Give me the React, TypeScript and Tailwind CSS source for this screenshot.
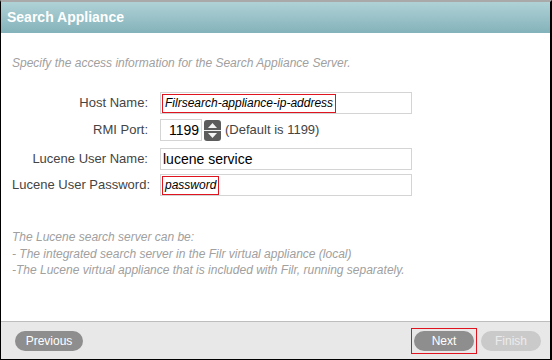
type Field = { label: string; value: string; marked?: boolean };

const FIELDS: Field[] = [
  { label: 'Host Name:', value: 'Filrsearch-appliance-ip-address', marked: true },
  { label: 'Lucene User Name:', value: 'lucene service' },
  { label: 'Lucene User Password:', value: 'password', marked: true },
];

function Row({ label, children, className = '' }: { label: string; children: React.ReactNode; className?: string }) {
  return (
    <div className={`flex items-center ${className}`}>
      <div className="w-[136px] shrink-0 whitespace-nowrap text-right text-[13px] text-[#444]">{label}</div>
      <div className="ml-[12px] flex items-center">{children}</div>
    </div>
  );
}

function TextBox({ value, marked }: Field) {
  return (
    <div className="w-[252px] h-[22px] border border-[#d4d4d4] bg-white flex items-center">
      {marked ? (
        <span className="ml-px border border-[#e0141e] px-[2px] h-[19px] flex items-center italic text-[12px] text-black">
          {value}
        </span>
      ) : (
        <span className="px-[2px] text-[14px] text-black">{value}</span>
      )}
    </div>
  );
}

function Spinner() {
  return (
    <svg width="17" height="21" viewBox="0 0 17 21" className="ml-[2px]">
      <rect x="0" y="0" width="17" height="21" rx="3" fill="#5c5c5c" />
      <line x1="0" y1="10.5" x2="17" y2="10.5" stroke="#f0f0f0" strokeWidth="1" />
      <path d="M8.5 3 L13 8 L4 8 Z" fill="#f4f4f4" />
      <path d="M8.5 18 L13 13 L4 13 Z" fill="#f4f4f4" />
    </svg>
  );
}

export default function App() {
  const [host, user, pass] = FIELDS;
  return (
    <div className="w-[552px] h-[360px] flex flex-col bg-white border-t-2 border-t-[#a9a9a9] border-l border-l-black border-r-2 border-r-black border-b border-b-black font-['Liberation_Sans',Arial,sans-serif]">
      <div className="h-[31px] flex items-center px-[6px] bg-gradient-to-b from-[#afd2d6] to-[#84b2ba]">
        <span className="text-[14px] font-bold text-white">Search Appliance</span>
      </div>

      <div className="flex-1 flex flex-col px-[11px]">
        <p className="mt-[21px] text-[12px] italic text-[#a0a0a0]">
          Specify the access information for the Search Appliance Server.
        </p>

        <div className="mt-[20px] flex flex-col">
          <Row label={host.label}>
            <TextBox {...host} />
          </Row>
          <Row label="RMI Port:" className="mt-[5px]">
            <div className="w-[42px] h-[22px] border border-[#d4d4d4] flex items-center justify-end pr-[2px] text-[14px] text-black">
              1199
            </div>
            <Spinner />
            <span className="ml-[4px] text-[13px] text-[#444]">(Default is 1199)</span>
          </Row>
          <Row label={user.label} className="mt-[7px]">
            <TextBox {...user} />
          </Row>
          <Row label={pass.label} className="mt-[4px]">
            <TextBox {...pass} />
          </Row>
        </div>

        <div className="mt-[33px] text-[12px] italic text-[#a0a0a0] leading-[16.5px]">
          <p>The Lucene search server can be:</p>
          <p>- The integrated search server in the Filr virtual appliance (local)</p>
          <p>-The Lucene virtual appliance that is included with Filr, running separately.</p>
        </div>
      </div>

      <div className="h-[38px] border-t border-[#bdbdbd] bg-[#e8e8e8] flex items-center pl-[14px] pr-[9px]">
        <button className="w-[68px] h-[20px] rounded-full bg-[#8e8e8e] text-white text-[12px]">Previous</button>
        <div className="ml-auto flex items-center">
          <div className="border border-[#e0141e] p-[2px]">
            <button className="w-[60px] h-[20px] rounded-full bg-[#8e8e8e] text-white text-[12px] block">Next</button>
          </div>
          <button className="ml-[4px] w-[60px] h-[20px] rounded-full bg-[#cacaca] text-[#ececec] text-[12px]">Finish</button>
        </div>
      </div>
    </div>
  );
}
